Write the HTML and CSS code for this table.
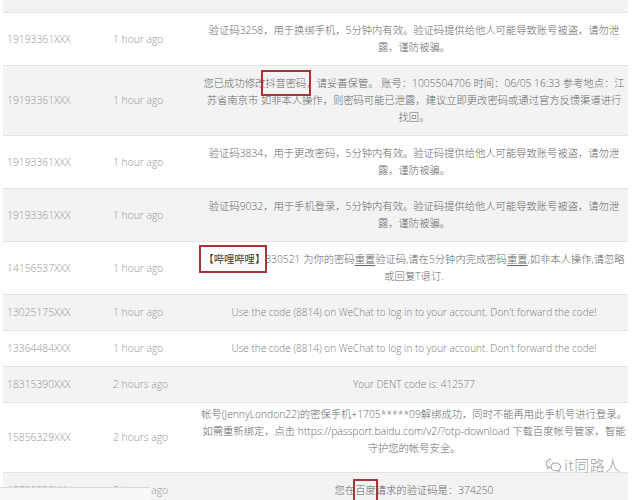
FILE: index.html
```html
<!DOCTYPE html>
<html lang="zh-CN">
<head>
<meta charset="utf-8">
<title>SMS list</title>
<link rel="stylesheet" href="styles.css">
</head>
<body>
<div class="page">
  <div class="table">
    <div class="row cut"></div>
    <div class="row">
      <div class="cell">19193361XXX</div>
      <div class="cell">1 hour ago</div>
      <div class="msg">验证码3258，用于换绑手机，5分钟内有效。验证码提供给他人可能导致账号被盗，请勿泄<br>露，谨防被骗。</div>
    </div>
    <div class="row">
      <div class="cell">19193361XXX</div>
      <div class="cell">1 hour ago</div>
      <div class="msg">您已成功修改<span class="mark mark-a">抖音密码</span>，请妥善保管。 账号：1005504706 时间：06/05 16:33 参考地点：江<br>苏省南京市 如非本人操作，则密码可能已泄露，建议立即更改密码或通过官方反馈渠道进行<br>找回。</div>
    </div>
    <div class="row">
      <div class="cell">19193361XXX</div>
      <div class="cell">1 hour ago</div>
      <div class="msg">验证码3834，用于更改密码，5分钟内有效。验证码提供给他人可能导致账号被盗，请勿泄<br>露，谨防被骗。</div>
    </div>
    <div class="row">
      <div class="cell">19193361XXX</div>
      <div class="cell">1 hour ago</div>
      <div class="msg">验证码9032，用于手机登录，5分钟内有效。验证码提供给他人可能导致账号被盗，请勿泄<br>露，谨防被骗。</div>
    </div>
    <div class="row">
      <div class="cell">14156537XXX</div>
      <div class="cell">1 hour ago</div>
      <div class="msg"><span class="mark mark-b brand">【哔哩哔哩】</span>330521 为你的密码<u>重置</u>验证码,请在5分钟内完成密码<u>重置</u>,如非本人操作,请忽略<br>或回复T退订.</div>
    </div>
    <div class="row">
      <div class="cell">13025175XXX</div>
      <div class="cell">1 hour ago</div>
      <div class="msg en">Use the code (8814) on WeChat to log in to your account. Don't forward the code!</div>
    </div>
    <div class="row">
      <div class="cell">13364484XXX</div>
      <div class="cell">1 hour ago</div>
      <div class="msg en">Use the code (8814) on WeChat to log in to your account. Don't forward the code!</div>
    </div>
    <div class="row">
      <div class="cell">18315390XXX</div>
      <div class="cell">2 hours ago</div>
      <div class="msg en">Your DENT code is: 412577</div>
    </div>
    <div class="row">
      <div class="cell">15856329XXX</div>
      <div class="cell">2 hours ago</div>
      <div class="msg msg-up">帐号(JennyLondon22)的密保手机+1705*****09解绑成功，同时不能再用此手机号进行登录。<br>如需重新绑定，点击 https://passport.baidu.com/v2/?otp-download 下载百度帐号管家，智能<br>守护您的帐号安全。</div>
    </div>
    <div class="row">
      <div class="cell">15750522XXX</div>
      <div class="cell">2 hours ago</div>
      <div class="msg">您在<span class="mark mark-c">百度</span>请求的验证码是：374250</div>
    </div>
  </div>

  <div class="crop"></div>

  <div class="watermark">
    <svg class="wm-icon" width="17" height="15" viewBox="0 0 16 14" fill="none" stroke="#a5a5a5" stroke-width="1">
      <path d="M6 1.2c-2.8 0-5 1.8-5 4 0 1.2.7 2.3 1.7 3l-.4 1.5 1.8-.9c.6.2 1.2.3 1.9.3"/>
      <path d="M10.3 4.6c-2.6 0-4.6 1.7-4.6 3.7s2 3.7 4.6 3.7c.5 0 1-.1 1.5-.2l1.5.8-.4-1.3c1-.7 1.700-1.7 1.7-3 0-2-2-3.7-4.3-3.7z"/>
      <circle cx="4.2" cy="4.3" r=".5" fill="#a5a5a5" stroke="none"/>
      <circle cx="7.4" cy="4.3" r=".5" fill="#a5a5a5" stroke="none"/>
      <circle cx="8.8" cy="7.6" r=".45" fill="#a5a5a5" stroke="none"/>
      <circle cx="11.8" cy="7.6" r=".45" fill="#a5a5a5" stroke="none"/>
    </svg>
    <span class="wm-text">it同路人</span>
  </div>
</div>
</body>
</html>
```

FILE: styles.css
```css
html, body {
  margin: 0;
  padding: 0;
  background: #ffffff;
}

body {
  font-family: "Open Sans", "Noto Sans CJK SC", sans-serif;
  font-size: 10.3px;
  font-weight: 300;
}

.page {
  position: relative;
  width: 635px;
  height: 500px;
  overflow: hidden;
}

.table {
  margin-left: 3px;
  width: 625px;
}

.row {
  display: grid;
  grid-template-columns: 106px 91px 428px;
  align-items: center;
  border-top: 1px solid #e3e3e3;
  line-height: 17px;
  background: #ffffff;
}

.row:nth-child(odd) {
  background: #f3f3f3;
}

.row.cut {
  border-top: none;
  height: 12px;
}

.cell {
  padding: 9px 0 9px 4px;
  color: #959595;
  white-space: nowrap;
}

.msg {
  padding: 9px 0;
  text-align: center;
  color: #666666;
  white-space: nowrap;
}

.msg.en {
  color: #7a7a7a;
  font-size: 10px;
}

.msg.msg-up {
  padding: 3px 0 15px;
}

.msg u {
  text-decoration: underline;
  text-underline-offset: 2px;
}

.brand {
  color: #383838;
  font-weight: 400;
}

.mark {
  position: relative;
}

.mark::after {
  content: "";
  position: absolute;
  left: -4px;
  right: -5px;
  top: -6px;
  bottom: -6px;
  border: 2px solid #a83339;
}

.mark-b::after {
  left: -4px;
  right: -2px;
  top: -7px;
  bottom: -7px;
}

.mark-c::after {
  left: -2px;
  right: -2px;
  top: -4px;
  bottom: -12px;
}

.crop {
  position: absolute;
  left: 0;
  top: 487px;
  width: 150px;
  height: 13px;
  background: #f8f8f8;
  border-top: 1px solid #dadada;
}

.watermark {
  position: absolute;
  left: 545px;
  top: 456px;
  display: flex;
  align-items: center;
  gap: 2px;
}

.wm-text {
  font-family: "Noto Sans CJK SC", sans-serif;
  font-size: 15px;
  font-weight: 300;
  letter-spacing: 0.5px;
  color: #a3a3a3;
  line-height: 18px;
  text-shadow: 0 0 2px #ffffff, 0 0 1px #ffffff;
}
```
